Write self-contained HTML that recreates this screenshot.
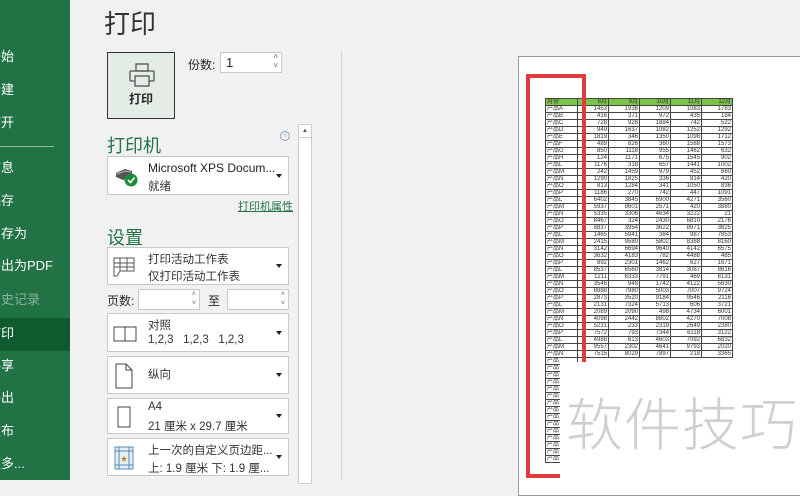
<!DOCTYPE html>
<html><head><meta charset="utf-8">
<style>
*{margin:0;padding:0;box-sizing:border-box}
body{width:800px;height:480px;overflow:hidden;position:relative;background:#f1f1f1;font-family:"Liberation Sans","Noto Sans CJK SC",sans-serif;color:#262626}
.side{position:absolute;left:0;top:0;width:70px;height:480px;background:#217346}
.side div{position:absolute;left:-12px;color:#fff;font-size:13px;white-space:nowrap;line-height:16px}
.side .act{position:absolute;left:0;top:318px;width:70px;height:33px;background:#0f5a2e}
.a{position:absolute}
.box{position:absolute;left:107px;width:182px;background:#fff;border:1px solid #c8c8c8}
.dd{position:absolute;right:6px;top:50%;margin-top:-2px;width:0;height:0;border-left:3.5px solid transparent;border-right:3.5px solid transparent;border-top:4px solid #222}
.t1{position:absolute;left:40px;font-size:11.5px;color:#333;white-space:nowrap}
h2{position:absolute;left:107px;font-weight:normal;font-size:18px;color:#217346}
.page{position:absolute;left:518px;top:56px;width:300px;height:440px;background:#fff;border:1px solid #9a9a9a}
table{position:absolute;left:545px;top:98px;border-collapse:collapse;font-size:6px;line-height:6px;font-family:"Liberation Sans","Noto Sans CJK SC",sans-serif}
td{border:1px solid #444;height:7px;padding:0 1px;text-align:right;color:#333;overflow:hidden;white-space:nowrap}
td:first-child{text-align:left;width:32px}
td:nth-child(2){width:6px}
td:nth-child(3){width:25px}
td:nth-child(n+4){width:31px}
tr.h td{background:#7cc34a}
</style></head><body>
<div class="side">
<div style="top:49px">开始</div>
<div style="top:82px">新建</div>
<div style="top:115px">打开</div>
<div style="top:146px;left:0;width:54px;height:1px;background:#8fb9a0"></div>
<div style="top:160px">信息</div>
<div style="top:193px">保存</div>
<div style="top:226px">另存为</div>
<div style="top:258px">导出为PDF</div>
<div style="top:292px;color:#8ab39b">历史记录</div>
<span class="act"></span>
<div style="top:326px">打印</div>
<div style="top:358px">共享</div>
<div style="top:390px">导出</div>
<div style="top:423px">发布</div>
<div style="top:456px">更多...</div>
</div>

<div class="a" style="left:104px;top:4px;font-size:26px;color:#333">打印</div>
<div class="a" style="left:107px;top:52px;width:68px;height:67px;background:#e3ede6;border:1px solid #333">
<svg width="28" height="26" style="position:absolute;left:20px;top:9px" viewBox="0 0 28 26" fill="none" stroke="#555" stroke-width="1.3"><rect x="8" y="2" width="12" height="7"/><rect x="2" y="9" width="24" height="10" rx="1"/><rect x="7" y="14" width="14" height="10" fill="#e3ede6"/></svg>
<div style="position:absolute;left:0;width:66px;top:37px;text-align:center;font-size:12px;font-weight:bold">打印</div>
</div>
<div class="a" style="left:188px;top:56px;font-size:12px">份数:</div>
<div class="a" style="left:220px;top:52px;width:62px;height:21px;background:#fff;border:1px solid #c8c8c8;font-size:13px;padding:2px 5px">1<span style="position:absolute;right:3px;top:-1px;font-size:8px;line-height:9px;color:#666">˄<br>˅</span></div>

<h2 style="top:132px">打印机</h2>
<div class="a" style="left:280px;top:131px;width:10px;height:10px;border:1px solid #8aa3c0;border-radius:50%;font-size:7px;color:#8aa3c0;text-align:center;line-height:8px">i</div>
<div class="box" style="top:156px;height:39px">
<svg width="26" height="22" style="position:absolute;left:5px;top:9px" viewBox="0 0 26 22"><path d="M3 7 L12 3 L19 5 L19 11 L10 14 L3 11Z" fill="#555"/><path d="M4 8 L12 5 L18 6" stroke="#bbb" fill="none"/><circle cx="18" cy="14" r="6.5" fill="#1e8a3c"/><path d="M15 14 L17.5 16.5 L21.5 11.5" stroke="#fff" stroke-width="1.6" fill="none"/></svg>
<div class="t1" style="top:4px;font-size:12px;color:#222">Microsoft XPS Docum...</div>
<div class="t1" style="top:21px">就绪</div><span class="dd"></span></div>
<div class="a" style="left:238px;top:198px;font-size:11px;color:#217346;text-decoration:underline">打印机属性</div>

<h2 style="top:224px">设置</h2>
<div class="box" style="top:247px;height:38px">
<svg width="22" height="20" style="position:absolute;left:5px;top:9px" viewBox="0 0 22 20" fill="none" stroke="#555"><path d="M1 1H21V14H7L4 19H1Z"/><path d="M1 6H21M1 10H21M7 1V14M14 1V14"/></svg>
<div class="t1" style="top:3px">打印活动工作表</div><div class="t1" style="top:20px">仅打印活动工作表</div><span class="dd"></span></div>
<div class="a" style="left:107px;top:292px;font-size:12px">页数:</div>
<div class="a" style="left:138px;top:289px;width:62px;height:21px;background:#fff;border:1px solid #c8c8c8"><span style="position:absolute;right:3px;top:0;font-size:7px;line-height:9px;color:#666">˄<br>˅</span></div>
<div class="a" style="left:208px;top:292px;font-size:12px">至</div>
<div class="a" style="left:227px;top:289px;width:62px;height:21px;background:#fff;border:1px solid #c8c8c8"><span style="position:absolute;right:3px;top:0;font-size:7px;line-height:9px;color:#666">˄<br>˅</span></div>
<div class="box" style="top:313px;height:39px">
<svg width="24" height="16" style="position:absolute;left:5px;top:12px" viewBox="0 0 24 16" fill="none" stroke="#444"><rect x="1" y="1" width="11" height="14"/><rect x="12" y="1" width="11" height="14"/></svg>
<div class="t1" style="top:3px">对照</div><div class="t1" style="top:20px">1,2,3&nbsp;&nbsp;&nbsp;1,2,3&nbsp;&nbsp;&nbsp;1,2,3</div><span class="dd"></span></div>
<div class="box" style="top:356px;height:38px">
<svg width="18" height="26" style="position:absolute;left:7px;top:6px" viewBox="0 0 18 26" fill="none" stroke="#444"><path d="M1 1H11L17 7V25H1Z M11 1V7H17"/></svg>
<div class="t1" style="top:9px">纵向</div><span class="dd"></span></div>
<div class="box" style="top:398px;height:36px">
<svg width="14" height="22" style="position:absolute;left:9px;top:7px" viewBox="0 0 14 22" fill="none" stroke="#444"><rect x="1" y="1" width="12" height="20"/></svg>
<div class="t1" style="top:2px">A4</div><div class="t1" style="top:19px">21 厘米 x 29.7 厘米</div><span class="dd"></span></div>
<div class="box" style="top:438px;height:38px">
<svg width="20" height="24" style="position:absolute;left:6px;top:7px" viewBox="0 0 20 24" fill="none" stroke="#5a8bb0"><rect x="1" y="1" width="18" height="22" fill="#e3eef7"/><path d="M1 5H19M1 19H19M5 1V23M15 1V23"/><text x="10" y="15" font-size="7" fill="#d08020" stroke="none" text-anchor="middle">★</text></svg>
<div class="t1" style="top:3px">上一次的自定义页边距...</div><div class="t1" style="top:21px">上: 1.9 厘米 下: 1.9 厘...</div><span class="dd"></span></div>

<div class="a" style="left:298px;top:124px;width:14px;height:360px;background:#fff;border:1px solid #ccc"></div>
<div class="a" style="left:298px;top:124px;width:14px;height:14px;border:1px solid #ccc;font-size:6px;text-align:center;line-height:12px;color:#555">▲</div>
<div class="a" style="left:341px;top:50px;width:1px;height:430px;background:#d6d6d6"></div>

<div class="page"></div>
<table>
<tr class="h"><td>月份</td><td></td><td>8月</td><td>9月</td><td>10月</td><td>11月</td><td>12月</td></tr>
<tr><td>产品A</td><td></td><td>1453</td><td>1936</td><td>1209</td><td>1083</td><td>1783</td></tr>
<tr><td>产品B</td><td></td><td>416</td><td>371</td><td>972</td><td>435</td><td>184</td></tr>
<tr><td>产品C</td><td></td><td>728</td><td>928</td><td>1884</td><td>742</td><td>522</td></tr>
<tr><td>产品D</td><td></td><td>949</td><td>1637</td><td>1082</td><td>1252</td><td>1292</td></tr>
<tr><td>产品E</td><td></td><td>1819</td><td>346</td><td>1350</td><td>1098</td><td>1712</td></tr>
<tr><td>产品F</td><td></td><td>489</td><td>826</td><td>360</td><td>1588</td><td>1573</td></tr>
<tr><td>产品G</td><td></td><td>850</td><td>1118</td><td>955</td><td>1462</td><td>632</td></tr>
<tr><td>产品H</td><td></td><td>124</td><td>1171</td><td>675</td><td>1545</td><td>902</td></tr>
<tr><td>产品L</td><td></td><td>1176</td><td>318</td><td>657</td><td>1441</td><td>1002</td></tr>
<tr><td>产品M</td><td></td><td>242</td><td>1459</td><td>979</td><td>452</td><td>660</td></tr>
<tr><td>产品N</td><td></td><td>1290</td><td>1825</td><td>336</td><td>814</td><td>420</td></tr>
<tr><td>产品O</td><td></td><td>813</td><td>1284</td><td>341</td><td>1050</td><td>836</td></tr>
<tr><td>产品P</td><td></td><td>1186</td><td>270</td><td>742</td><td>447</td><td>1091</td></tr>
<tr><td>产品L</td><td></td><td>6402</td><td>3845</td><td>6900</td><td>4271</td><td>3560</td></tr>
<tr><td>产品M</td><td></td><td>5937</td><td>8601</td><td>2571</td><td>420</td><td>3880</td></tr>
<tr><td>产品N</td><td></td><td>5335</td><td>3306</td><td>4634</td><td>3222</td><td>21</td></tr>
<tr><td>产品O</td><td></td><td>8467</td><td>324</td><td>2430</td><td>6810</td><td>2176</td></tr>
<tr><td>产品P</td><td></td><td>8837</td><td>3954</td><td>3622</td><td>8971</td><td>3625</td></tr>
<tr><td>产品L</td><td></td><td>1465</td><td>5941</td><td>384</td><td>987</td><td>7853</td></tr>
<tr><td>产品M</td><td></td><td>2415</td><td>9580</td><td>5802</td><td>8388</td><td>8160</td></tr>
<tr><td>产品N</td><td></td><td>3142</td><td>6694</td><td>9640</td><td>4142</td><td>6575</td></tr>
<tr><td>产品O</td><td></td><td>3632</td><td>4183</td><td>782</td><td>4488</td><td>485</td></tr>
<tr><td>产品P</td><td></td><td>892</td><td>2301</td><td>1462</td><td>627</td><td>1671</td></tr>
<tr><td>产品L</td><td></td><td>8537</td><td>6560</td><td>3814</td><td>3087</td><td>8616</td></tr>
<tr><td>产品M</td><td></td><td>1211</td><td>6333</td><td>7791</td><td>469</td><td>6131</td></tr>
<tr><td>产品N</td><td></td><td>3546</td><td>948</td><td>1742</td><td>4122</td><td>5630</td></tr>
<tr><td>产品O</td><td></td><td>8888</td><td>7980</td><td>5003</td><td>7007</td><td>9724</td></tr>
<tr><td>产品P</td><td></td><td>2873</td><td>3520</td><td>9184</td><td>9546</td><td>2116</td></tr>
<tr><td>产品L</td><td></td><td>2131</td><td>7324</td><td>5713</td><td>606</td><td>3721</td></tr>
<tr><td>产品M</td><td></td><td>2089</td><td>2090</td><td>498</td><td>4734</td><td>6001</td></tr>
<tr><td>产品N</td><td></td><td>4098</td><td>2442</td><td>8802</td><td>4270</td><td>7008</td></tr>
<tr><td>产品O</td><td></td><td>5231</td><td>233</td><td>2319</td><td>2649</td><td>2380</td></tr>
<tr><td>产品P</td><td></td><td>7572</td><td>793</td><td>7344</td><td>6118</td><td>3122</td></tr>
<tr><td>产品L</td><td></td><td>4988</td><td>613</td><td>4603</td><td>7092</td><td>6832</td></tr>
<tr><td>产品M</td><td></td><td>9557</td><td>2302</td><td>4641</td><td>9793</td><td>2020</td></tr>
<tr><td>产品N</td><td></td><td>7515</td><td>8029</td><td>7897</td><td>218</td><td>3365</td></tr>
<tr><td>产品</td></tr><tr><td>产品</td></tr><tr><td>产品</td></tr><tr><td>产品</td></tr><tr><td>产品</td></tr>
<tr><td>产品</td></tr><tr><td>产品</td></tr><tr><td>产品</td></tr><tr><td>产品</td></tr><tr><td>产品</td></tr>
<tr><td>产品</td></tr><tr><td>产品</td></tr><tr><td>产品</td></tr><tr><td>产品</td></tr><tr><td>产品</td></tr>
</table>
<div class="a" style="left:526px;top:74px;width:60px;height:404px;border:4px solid #e0393e"></div>
<div class="a" style="left:560px;top:362px;width:240px;height:118px;background:#fff"></div>
<div class="a" style="left:566px;top:380px;font-size:57px;color:#cfcfcf;letter-spacing:1px;font-family:'Noto Sans CJK SC',sans-serif;font-weight:300">软件技巧</div>
</body></html>
